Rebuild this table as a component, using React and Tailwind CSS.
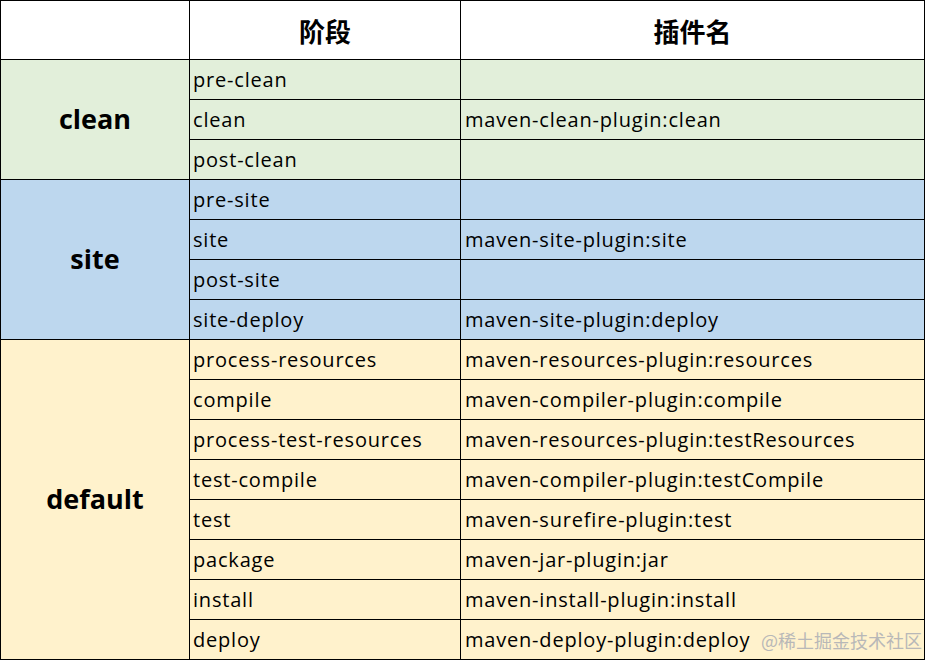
import React from "react";

const groups = [
  {
    name: "clean",
    bg: "bg-[#e2efda]",
    rows: [
      ["pre-clean", ""],
      ["clean", "maven-clean-plugin:clean"],
      ["post-clean", ""],
    ],
  },
  {
    name: "site",
    bg: "bg-[#bdd7ee]",
    rows: [
      ["pre-site", ""],
      ["site", "maven-site-plugin:site"],
      ["post-site", ""],
      ["site-deploy", "maven-site-plugin:deploy"],
    ],
  },
  {
    name: "default",
    bg: "bg-[#fff2cc]",
    rows: [
      ["process-resources", "maven-resources-plugin:resources"],
      ["compile", "maven-compiler-plugin:compile"],
      ["process-test-resources", "maven-resources-plugin:testResources"],
      ["test-compile", "maven-compiler-plugin:testCompile"],
      ["test", "maven-surefire-plugin:test"],
      ["package", "maven-jar-plugin:jar"],
      ["install", "maven-install-plugin:install"],
      ["deploy", "maven-deploy-plugin:deploy"],
    ],
  },
];

const cell = "border border-black";

export default function App() {
  return (
    <div className="relative w-[926px] h-[661px] bg-white font-['Open_Sans','Noto_Sans_CJK_SC',sans-serif] text-black">
      <table className="w-[925px] border-collapse table-fixed">
        <colgroup>
          <col className="w-[189px]" />
          <col className="w-[271px]" />
          <col />
        </colgroup>
        <thead>
          <tr className="h-[59px] bg-white">
            <th className={cell}></th>
            <th className={`${cell} text-[26px] font-bold font-['Noto_Sans_CJK_SC',sans-serif]`}>阶段</th>
            <th className={`${cell} text-[26px] font-bold font-['Noto_Sans_CJK_SC',sans-serif]`}>插件名</th>
          </tr>
        </thead>
        <tbody>
          {groups.map((g) =>
            g.rows.map((r, i) => (
              <tr key={g.name + i} className={`h-[40px] ${g.bg}`}>
                {i === 0 && (
                  <td rowSpan={g.rows.length} className={`${cell} text-center text-[27px] font-bold`}>
                    {g.name}
                  </td>
                )}
                <td className={`${cell} pl-[3px] text-[20px] leading-none tracking-[0.8px] whitespace-nowrap`}>{r[0]}</td>
                <td className={`${cell} pl-[4px] text-[20px] leading-none tracking-[0.8px] whitespace-nowrap`}>{r[1]}</td>
              </tr>
            ))
          )}
        </tbody>
      </table>
      <div className="absolute right-[4px] bottom-[12px] text-[18px] leading-none text-[#b8b8b8] font-['Noto_Sans_CJK_SC',sans-serif]">
        @稀土掘金技术社区
      </div>
    </div>
  );
}
